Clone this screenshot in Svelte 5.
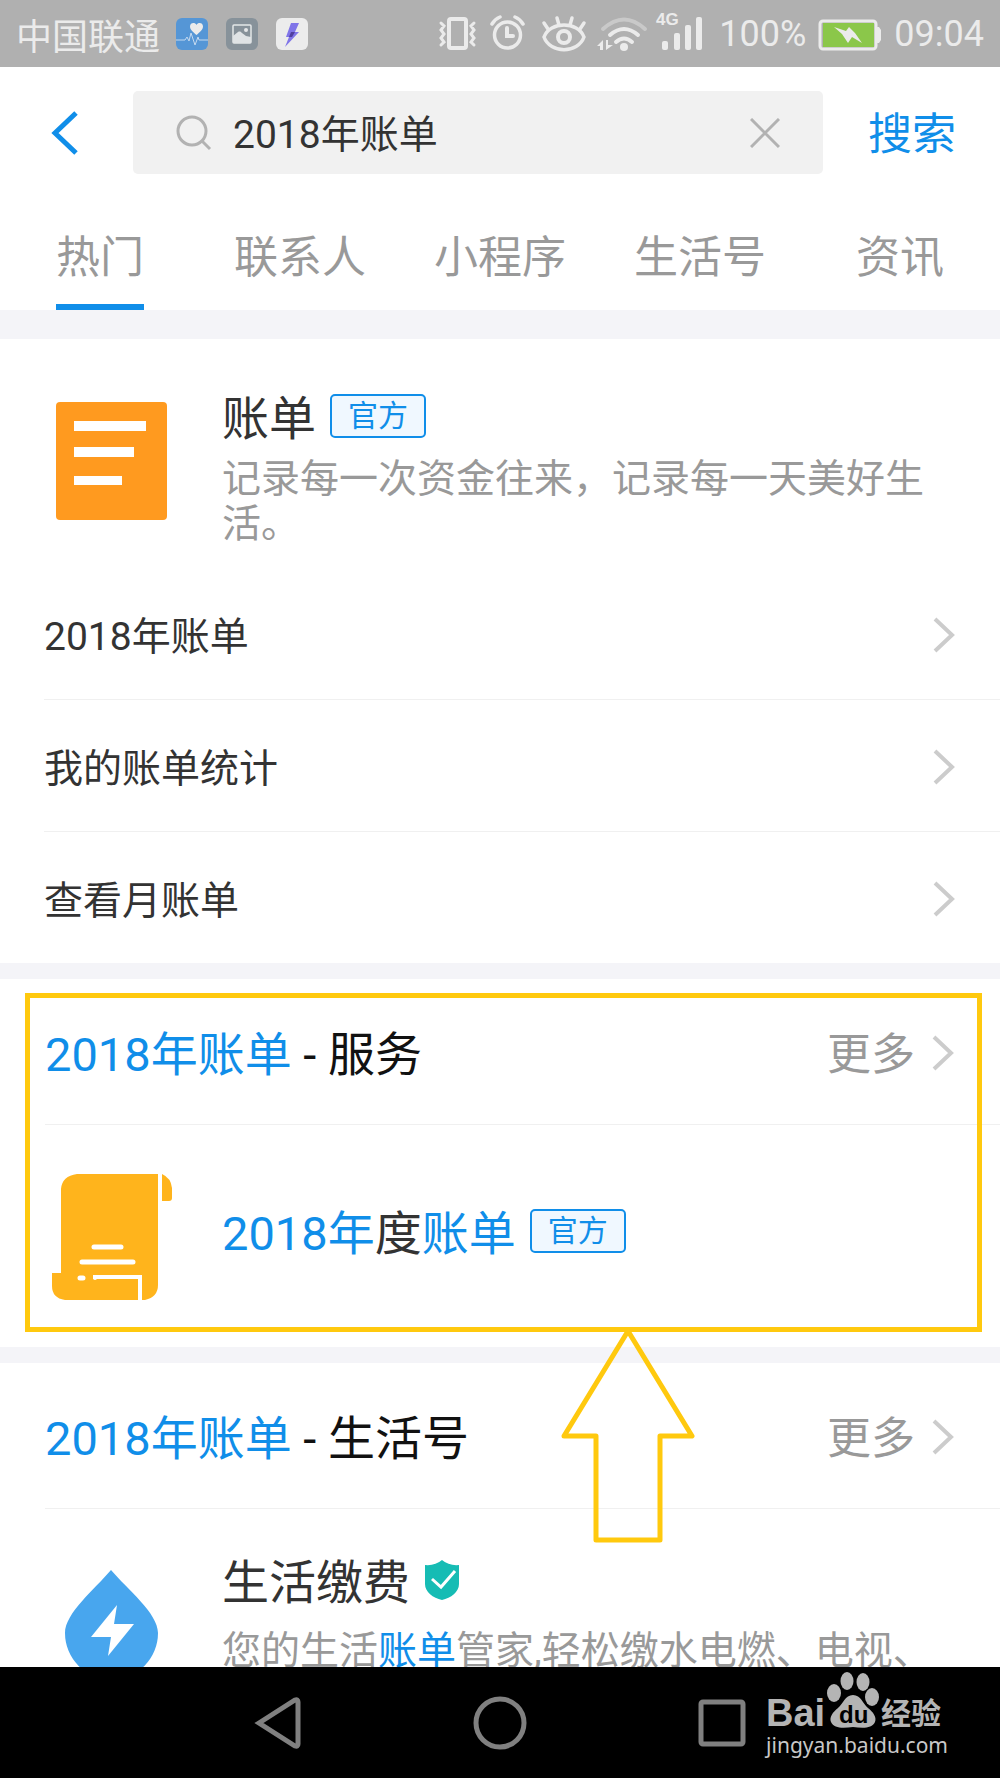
<script lang="ts">
    let keyword = $state("2018年账单");
    let current = $state(0);
    const tabs = ["热门", "联系人", "小程序", "生活号", "资讯"];
    const links = ["2018年账单", "我的账单统计", "查看月账单"];
</script>

{#snippet arrow()}
    <svg class="arrow" width="24" height="40" viewBox="0 0 24 40" aria-hidden="true">
        <path d="M3 4l17 16L3 36" fill="none" stroke="#ccc" stroke-width="4" />
    </svg>
{/snippet}

{#snippet heading(name: string)}
    <div class="heading">
        <h2><em>2018年账单</em> - {name}</h2>
        <a class="more" href="#more">更多{@render arrow()}</a>
    </div>
{/snippet}

<div class="phone">
    <div class="status">
        <span>中国联通</span>
        <div class="notices">
            <svg width="32" height="32" viewBox="0 0 32 32">
                <rect width="32" height="32" rx="6" fill="#5596d6" />
                <path d="M20.500 17C17 14 14 11.500 14 8.500c0-4 5-4.500 6.500-1.500 1.500-3 6.500-2.500 6.500 1.500 0 3-3 5.500-6.500 8.500z" fill="#ebebeb" />
                <path d="M0 22h9l2-3 2 4 2-8 4 12 3-8 1 3h9" fill="none" stroke="#c5daf0" stroke-width="1" />
            </svg>
            <svg width="32" height="32" viewBox="0 0 32 32">
                <rect width="32" height="32" rx="6" fill="#87929a" />
                <rect x="7" y="7" width="18" height="18" rx="1" fill="none" stroke="#e4e7e8" stroke-width="1.500" />
                <path d="M7 18l5-4c2-1 3 0 4 1l4 3 5 1v6H7z" fill="#dfe3e5" />
                <circle cx="20" cy="12" r="2" fill="#e4e7e8" />
            </svg>
            <svg width="32" height="32" viewBox="0 0 32 32">
                <rect width="32" height="32" rx="6" fill="#ececec" />
                <path d="M15 5h8l-4 9h4L9 29l4-10h-3z" fill="#8075e8" />
                <path d="M15 14h4l-3 5h-3z" fill="#5040a0" />
            </svg>
        </div>
        <div class="signals">
            <svg width="43" height="41" viewBox="0 0 43 41">
                <rect x="13" y="6" width="17" height="29" rx="2" stroke-width="4" />
                <path d="M5 10l3 3-3 4 3 4-3 4 3 4-3 3M38 10l-3 3 3 4-3 4 3 4-3 4 3 3" stroke-width="3" />
            </svg>
            <svg width="43" height="41" viewBox="0 0 43 41">
                <circle cx="20.500" cy="22" r="13" stroke-width="3.500" />
                <path d="M20 15v8h6" stroke-width="4" />
                <path d="M5 11q3-5 8-7M28 4q5 2 8 7" stroke-width="3.500" />
            </svg>
            <svg width="51" height="41" viewBox="0 0 51 41">
                <path d="M6 24c6-16 34-16 40 0-6 17-34 17-40 0z" stroke-width="3.500" />
                <circle cx="26" cy="24" r="6" stroke-width="4" />
                <path d="M6 10l4 6M19 5l2 7M34 5l-2 7M46 10l-4 6" stroke-width="3.500" />
            </svg>
            <svg width="51" height="41" viewBox="0 0 51 41">
                <path d="M6 16Q27-3 48 16" stroke="#c9c9c9" stroke-width="4" />
                <path d="M13 22Q27 10 41 22M19 29Q27 22 35 29" stroke-width="4" />
                <circle cx="27" cy="34" r="4" class="solid" />
                <path d="M0 33l6-6v10H3v-4zM9 37V27h2v5h5z" class="solid" />
            </svg>
            <svg width="51" height="41" viewBox="0 0 51 41">
                <text x="0" y="12" class="solid">4G</text>
                <rect x="6" y="28" width="6" height="9" rx="2" class="solid" />
                <rect x="18" y="20" width="6" height="17" rx="2" class="solid" />
                <rect x="29" y="12" width="6" height="25" rx="2" class="solid" />
                <rect x="40" y="4" width="6" height="33" rx="2" class="solid" />
            </svg>
            <span>100%</span>
            <svg width="64" height="41" viewBox="0 0 64 41">
                <rect x="2" y="8" width="56" height="28" rx="3" stroke-width="3" />
                <path d="M59 14h2l2 3v10l-2 3h-2z" class="solid" />
                <rect x="5" y="10" width="51" height="24" fill="#8bc74a" stroke="none" />
                <path d="M16 14l12 4 3-4 6 6 7 10-10-6-4 6-6-9z" class="solid" />
            </svg>
            <span>09:04</span>
        </div>
    </div>

    <header>
        <button class="back" aria-label="返回">
            <svg width="30" height="44" viewBox="0 0 30 44">
                <path d="M26 2L5 22l21 20" fill="none" stroke="#108ee9" stroke-width="5" />
            </svg>
        </button>
        <div class="search">
            <svg width="36" height="36" viewBox="0 0 36 36" aria-hidden="true">
                <path d="M26 26l8 8" stroke="#b2b2b2" stroke-width="3" />
                <circle cx="16" cy="16" r="14" fill="none" stroke="#b2b2b2" stroke-width="3" />
            </svg>
            <input type="text" aria-label="搜索内容" bind:value={keyword} />
            <button aria-label="清空" onclick={() => (keyword = "")}>
                <svg width="30" height="30" viewBox="0 0 30 30">
                    <path d="M1 1l28 28M29 1L1 29" stroke="#b2b2b2" stroke-width="3" />
                </svg>
            </button>
        </div>
        <button class="submit">搜索</button>
    </header>

    <nav class="tabs">
        {#each tabs as tab, i}
            <button class:active={current === i} onclick={() => (current = i)}><span>{tab}</span></button>
        {/each}
    </nav>

    <main>
        <section>
            <div class="item">
                <svg width="133" height="148" viewBox="0 0 133 148" aria-hidden="true">
                    <rect x="11" y="15" width="111" height="118" rx="4" fill="#ff9a1f" />
                    <path d="M29 34h72v10H29zM29 60h60v10H29zM29 89h48v9H29z" fill="#fff" />
                </svg>
                <div class="info">
                    <h3>账单 <span class="badge">官方</span></h3>
                    <p>记录每一次资金往来，记录每一天美好生活。</p>
                </div>
            </div>
            <ul>
                {#each links as link}
                    <li><a href="#link">{link}{@render arrow()}</a></li>
                {/each}
            </ul>
        </section>

        <section>
            {@render heading("服务")}
            <div class="item middle">
                <svg width="133" height="148" viewBox="0 0 133 148" aria-hidden="true">
                    <path d="M32 12h81v111q0 12-13 15h-3v-25H48v4h45v21H20Q7 136 7 124v-13h9V27Q17 14 32 12z" fill="#ffb41c" />
                    <path d="M117 12q9 4 10 14v10q0 3-3 3h-7z" fill="#ffb41c" />
                    <path d="M49 85h27M37 100h51M35 116h3" fill="none" stroke="#fff" stroke-width="5" stroke-linecap="round" />
                    <circle cx="50" cy="116" r="2" fill="#fff" />
                </svg>
                <div class="info">
                    <h3><span><em>2018年</em>度<em>账单</em></span> <span class="badge">官方</span></h3>
                </div>
            </div>
            <div class="marker">
                <svg width="136" height="216" viewBox="0 0 136 216" aria-hidden="true">
                    <path d="M68 4l64 105h-32v104H36V109H4z" fill="none" stroke="#ffc90e" stroke-width="5" stroke-linejoin="round" />
                </svg>
            </div>
        </section>

        <section>
            {@render heading("生活号")}
            <div class="item life">
                <svg width="133" height="148" viewBox="0 0 133 148" aria-hidden="true">
                    <path d="M66 19C82 38 113 62 113 82a46 46 0 0 1-93 0C20 62 50 38 66 19z" fill="#48a6ee" />
                    <path d="M72 54l-3 19h20l-26 32 3-19H46z" fill="#fff" />
                </svg>
                <div class="info">
                    <h3>
                        生活缴费
                        <svg width="36" height="42" viewBox="0 0 36 42" aria-label="已认证">
                            <path d="M18 1q7 6 17 5v19c0 8-8 14-17 16C9 39 1 33 1 25V6q10 1 17-5z" fill="#16bcb4" />
                            <path d="M8 20l9 8 14-16" fill="none" stroke="#fff" stroke-width="3" />
                        </svg>
                    </h3>
                    <p>您的生活<em>账单</em>管家,轻松缴水电燃、电视、</p>
                </div>
            </div>
        </section>
    </main>

    <footer>
        <div class="keys">
            <button aria-label="后退">
                <svg width="54" height="54" viewBox="0 0 54 54"><path d="M8 27L44 4q3-1 3 2v42q0 3-3 2z" /></svg>
            </button>
            <button aria-label="主屏幕">
                <svg width="54" height="54" viewBox="0 0 54 54"><circle cx="27" cy="27" r="24" /></svg>
            </button>
            <button aria-label="最近任务">
                <svg width="54" height="54" viewBox="0 0 54 54"><rect x="6" y="6" width="42" height="42" rx="2" /></svg>
            </button>
        </div>
        <div class="watermark">
            <svg width="180" height="60" viewBox="0 0 180 60">
                <g fill="#b4b4b4">
                    <text x="0" y="55" class="bai">Bai</text>
                    <ellipse cx="68" cy="22" rx="7" ry="9" />
                    <ellipse cx="81" cy="10" rx="6.500" ry="9" />
                    <ellipse cx="97" cy="11" rx="6.500" ry="9" />
                    <ellipse cx="106" cy="26" rx="7" ry="9" />
                    <path d="M87 24c8 0 10 9 15 13 5 4 9 9 7 14-3 7-13 6-22 5-9 1-19 2-22-5-2-5 2-10 7-14 5-4 7-13 15-13z" />
                    <text x="115" y="53" class="jy">经验</text>
                </g>
                <text x="73" y="52" class="du">du</text>
            </svg>
            <span>jingyan.baidu.com</span>
        </div>
    </footer>
</div>

<style>
    :global(body) {
        background: #fff;
    }

    .phone {
        display: flex;
        flex-direction: column;
        height: 100vh;
        overflow: hidden;
        background: #fff;
        color: #333;
        font-family: Roboto, "Noto Sans CJK SC", sans-serif;
        font-size: 39px;
    }

    svg {
        display: block;
        flex: none;
    }

    button {
        border: 0;
        padding: 0;
        background: none;
        color: inherit;
        font: inherit;
        cursor: pointer;
    }

    a {
        color: inherit;
        text-decoration: none;
    }

    em {
        color: #108ee9;
        font-style: normal;
    }

    h2, h3, p, ul {
        margin: 0;
        padding: 0;
        font-weight: 400;
    }

    .status {
        display: flex;
        align-items: center;
        flex: none;
        height: 67px;
        padding: 0 16px;
        background: #b0b0b0;
        color: #ebebeb;
        font-size: 36px;
    }

    .notices {
        display: flex;
        gap: 18px;
        margin-left: 16px;
    }

    .signals {
        display: flex;
        align-items: center;
        gap: 8px;
        margin-left: auto;
    }

    .signals svg {
        fill: none;
        stroke: #ebebeb;
        stroke-linecap: round;
        overflow: visible;
    }

    .signals .solid {
        fill: #ebebeb;
        stroke: none;
    }

    .signals text {
        font: bold 17px "Liberation Sans", sans-serif;
    }

    .signals span {
        margin: 0 4px;
    }

    .signals span:last-child {
        margin-right: 0;
    }

    header {
        display: flex;
        align-items: center;
        flex: none;
        padding: 24px 44px 24px 50px;
    }

    .search {
        display: flex;
        align-items: center;
        flex: 1;
        min-width: 0;
        height: 83px;
        margin: 0 45px 0 53px;
        padding: 0 43px;
        box-sizing: border-box;
        border-radius: 5px;
        background: #f1f1f1;
    }

    .search input {
        flex: 1;
        min-width: 0;
        margin: 0 21px;
        padding: 0 0 4px;
        border: 0;
        outline: 0;
        background: none;
        color: #333;
        font: inherit;
    }

    .submit {
        padding-top: 4px;
        color: #108ee9;
        font-size: 44px;
        line-height: 60px;
    }

    .tabs {
        display: flex;
        flex: none;
        border-bottom: 29px solid #f4f4f8;
        color: #999;
        font-size: 44px;
    }

    .tabs button {
        flex: 1;
    }

    .tabs span {
        display: block;
        width: fit-content;
        height: 106px;
        margin: 0 auto;
        border-bottom: 6px solid transparent;
        line-height: 120px;
    }

    .tabs .active span {
        border-color: #108ee9;
    }

    main {
        flex: 1;
        min-height: 0;
        overflow: hidden;
    }

    section {
        position: relative;
        border-bottom: 16px solid #f4f4f8;
    }

    .item {
        display: flex;
        gap: 44px;
        padding: 48px 45px 21px;
    }

    .middle {
        align-items: center;
        padding: 37px 45px;
    }

    .life {
        padding-top: 42px;
    }

    .info {
        flex: 1;
        min-width: 0;
        padding-top: 2px;
    }

    .middle .info {
        padding: 0 0 4px;
    }

    h3 {
        display: flex;
        align-items: center;
        gap: 14px;
        font-size: 47px;
        line-height: 60px;
    }

    h3 svg {
        margin-bottom: 6px;
    }

    .badge {
        margin-bottom: 6px;
        padding: 0 16px;
        border: 2px solid #108ee9;
        border-radius: 5px;
        background: #f0f8ff;
        color: #108ee9;
        font-size: 30px;
        line-height: 40px;
    }

    p {
        margin-top: 8px;
        color: #999;
        line-height: 45px;
    }

    .life p {
        margin-top: 16px;
    }

    ul {
        list-style: none;
    }

    li {
        margin-left: 44px;
        border-bottom: 1px solid #f0f0f0;
    }

    li:last-child {
        border-bottom: 0;
    }

    li a {
        display: flex;
        align-items: center;
        justify-content: space-between;
        height: 131px;
        padding: 0 44px 2px 0;
        box-sizing: border-box;
    }

    .arrow {
        margin-top: 4px;
    }

    .heading {
        display: flex;
        align-items: center;
        justify-content: space-between;
        height: 146px;
        margin-left: 45px;
        padding: 0 45px 2px 0;
        box-sizing: border-box;
        border-bottom: 1px solid #f0f0f0;
    }

    h2 {
        color: #111;
        font-size: 47px;
    }

    .more {
        display: flex;
        align-items: center;
        gap: 16px;
        color: #999;
        font-size: 44px;
    }

    .marker {
        position: absolute;
        inset: 14px 18px 15px 25px;
        z-index: 1;
        border: 5px solid #ffc90e;
        pointer-events: none;
    }

    .marker svg {
        position: absolute;
        top: 100%;
        left: 56%;
    }

    footer {
        position: relative;
        flex: none;
        background: #000;
    }

    .keys {
        display: grid;
        grid-template-columns: repeat(3, 1fr);
        width: 66.6%;
        height: 111px;
        margin: 0 auto;
    }

    .keys button {
        display: flex;
        align-items: center;
        justify-content: center;
    }

    .keys svg {
        fill: none;
        stroke: #808080;
        stroke-width: 5;
    }

    .watermark {
        position: absolute;
        top: 4px;
        right: 52px;
        color: #c8c8c8;
        font: 21px/28px "Noto Sans", sans-serif;
    }

    .bai {
        font: bold 38px "Liberation Sans", sans-serif;
    }

    .du {
        font: bold 24px "Liberation Sans", sans-serif;
        fill: #000;
    }

    .jy {
        font: bold 30px "Noto Sans CJK SC", sans-serif;
    }
</style>
